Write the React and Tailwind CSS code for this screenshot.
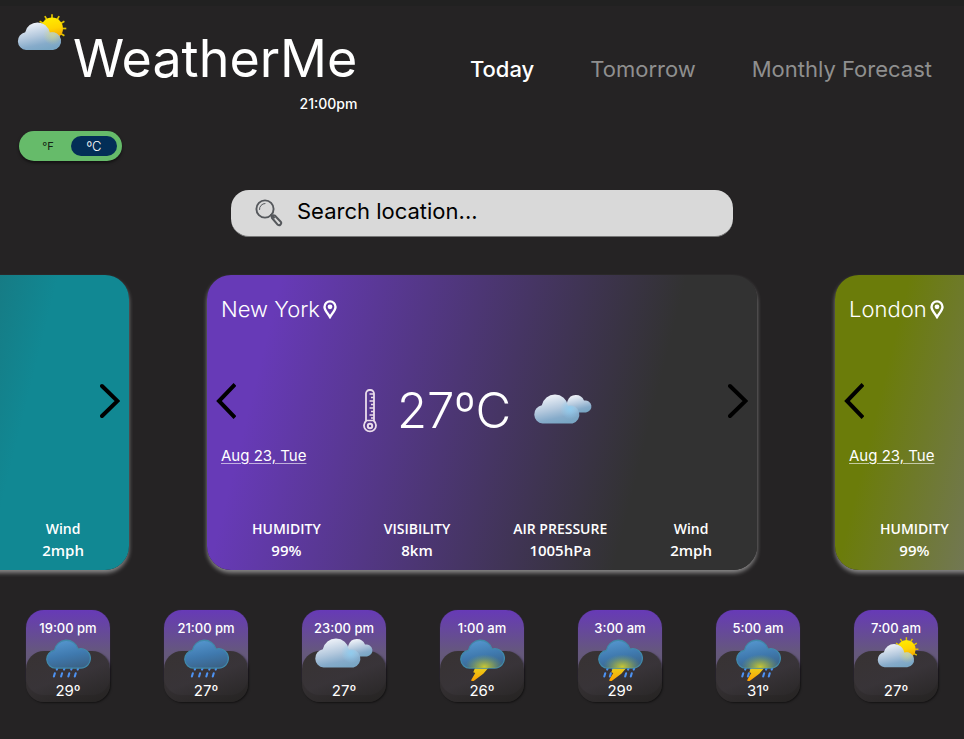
import React, { useId, useState } from 'react';

const CLOUD =
  'M12 38a11 11 0 0 1-1.5-21.9 15 15 0 0 1 29.3-1.6A12 12 0 1 1 43 38Z';

function Svg({ box, className, children }) {
  return (
    <svg viewBox={box} className={className} aria-hidden="true" fill="none">
      {children}
    </svg>
  );
}

function LightFill({ id }) {
  return (
    <linearGradient id={id} x1="0.25" y1="0" x2="0.6" y2="1">
      <stop offset="0" stopColor="#f4f6fb" />
      <stop offset="0.5" stopColor="#b3c8dd" />
      <stop offset="0.8" stopColor="#86abca" />
      <stop offset="1" stopColor="#79a6c4" />
    </linearGradient>
  );
}

function SunCloud({ className }) {
  const id = useId();
  const rays = Array.from({ length: 12 }, (_, i) => i * 30);
  return (
    <Svg box="0 0 50 38" className={className}>
      <defs>
        <LightFill id={id + 'c'} />
        <linearGradient id={id + 's'} x1="0.4" y1="0" x2="0.6" y2="1">
          <stop offset="0" stopColor="#ffec00" />
          <stop offset="0.5" stopColor="#ffd400" />
          <stop offset="1" stopColor="#f59a00" />
        </linearGradient>
        <radialGradient id={id + 'g'} cx="36" cy="21" r="10" gradientUnits="userSpaceOnUse">
          <stop offset="0" stopColor="#d9dc7a" stopOpacity="0.6" />
          <stop offset="1" stopColor="#d9dc7a" stopOpacity="0" />
        </radialGradient>
      </defs>
      {rays.map((a) => (
        <path key={a} d="M35 4V0.200" stroke="#e2c400" strokeWidth="1.700" transform={`rotate(${a} 35 14.5)`} />
      ))}
      <circle cx="35" cy="14.5" r="11" fill={`url(#${id}s)`} />
      <path d="M9 36a9 9 0 0 1-.8-17.8 12.5 12.5 0 0 1 24.5.4A8.9 8.9 0 1 1 36 36Z" fill={`url(#${id}c)`} />
      <path d="M9 36a9 9 0 0 1-.8-17.8 12.5 12.5 0 0 1 24.5.4A8.9 8.9 0 1 1 36 36Z" fill={`url(#${id}g)`} />
    </Svg>
  );
}

function Clouds({ className }) {
  const id = useId();
  return (
    <Svg box="0 0 60 31" className={className}>
      <defs>
        <LightFill id={id + 'c'} />
        <radialGradient id={id + 'g'} cx="37" cy="16" r="10" gradientUnits="userSpaceOnUse">
          <stop offset="0" stopColor="#8fcdf0" stopOpacity="0.9" />
          <stop offset="1" stopColor="#8fcdf0" stopOpacity="0" />
        </radialGradient>
      </defs>
      <path d="M38 19.500a9 9 0 0 1-3.500-11.500A8.800 8.800 0 0 1 51 7.600 6 6 0 1 1 53 19.400Z" fill={`url(#${id}c)`} />
      <path d="M9.500 30.500a9.200 9.200 0 0 1-.7-18.200 13.300 13.300 0 0 1 26.200.5A9 9 0 1 1 39.500 30.500Z" fill={`url(#${id}c)`} />
      <path d="M9.500 30.500a9.200 9.200 0 0 1-.7-18.200 13.300 13.300 0 0 1 26.200.5A9 9 0 1 1 39.500 30.500Z" fill={`url(#${id}g)`} />
    </Svg>
  );
}

function Storm({ rain, bolt, className }) {
  const id = useId();
  const drops = bolt ? [6, 13, 32, 39] : [8, 17, 26, 34];
  return (
    <Svg box="0 2 56 52" className={className}>
      <defs>
        <linearGradient id={id + 'c'} x1="0.3" y1="0" x2="0.6" y2="1">
          <stop offset="0" stopColor="#5596cf" />
          <stop offset="0.55" stopColor="#3f79ae" />
          <stop offset="1" stopColor="#3b6388" />
        </linearGradient>
        <linearGradient id={id + 'b'} x1="0.5" y1="0" x2="0.5" y2="1">
          <stop offset="0" stopColor="#e8d21c" />
          <stop offset="1" stopColor="#ff9d00" />
        </linearGradient>
        <radialGradient id={id + 'y'} cx="0.54" cy="0.95" r="0.44">
          <stop offset="0" stopColor="#c9c832" />
          <stop offset="0.45" stopColor="#a5b545" stopOpacity="0.6" />
          <stop offset="1" stopColor="#7aa060" stopOpacity="0" />
        </radialGradient>
      </defs>
      {rain && drops.map((x) => (
        <path key={x} d={`M${x + 6} 38.500l-.6 1.500M${x + 3} 44.500l-1.200 4`} stroke="#4d92f2" strokeWidth="2.600" strokeLinecap="round" />
      ))}
      {bolt && <path d="M19 37h17l-7 8-12.500 9.500c-1.700.800-3-.600-2.200-2.200l4.700-8-2.500-1Z" fill={`url(#${id}b)`} />}
      <path d={CLOUD} fill={`url(#${id}c)`} stroke="#4089aa" strokeWidth="1.6" />
      {bolt && <path d={CLOUD} fill={`url(#${id}y)`} />}
    </Svg>
  );
}

function Pin() {
  return (
    <Svg box="0 0 14 19" className="h-[19px] w-[14px]">
      <path d="M7 17C4.500 13 1.500 9.800 1.500 6.900a5.500 5.500 0 0 1 11 0C12.500 9.800 9.500 13 7 17Z" stroke="#fff" strokeWidth="2.400" />
      <circle cx="7" cy="6.800" r="2.400" fill="#fff" />
    </Svg>
  );
}

function Thermometer() {
  return (
    <Svg box="0 0 14 44" className="h-11 w-[14px]">
      <g stroke="#eadcea">
        <path d="M3 32V4.500a3.500 3.500 0 0 1 3.500-3.500h1A3.500 3.500 0 0 1 11 4.500V32a6 6 0 1 1-8 0Z" strokeWidth="1.800" />
        <path d="M3 31.500h8" strokeWidth="1.500" />
        <path d="M6.500 5H11M8 8.500h3M6.500 12H11M8 15.500h3M6.500 19H11M8 22.500h3M6.500 26H11M8 29h3" strokeWidth="1.400" />
      </g>
      <circle cx="7" cy="37" r="2.200" stroke="#eadcea" strokeWidth="2" />
    </Svg>
  );
}

function Magnifier() {
  return (
    <Svg box="0 0 28 28" className="h-7 w-7">
      <g stroke="#55585c" strokeLinecap="round">
        <circle cx="10" cy="10" r="8.600" strokeWidth="1.900" />
        <path d="M4.500 10.500A5.500 5.500 0 0 1 10 4.500" strokeWidth="1" />
        <path d="M16 16l3 2.500" strokeWidth="2" />
        <path d="M17 19c-.8-1.700 1-3.500 2.800-2.500l5.900 6.200c1.500 1.800-1 4.600-2.900 3.100Z" strokeWidth="2" strokeLinejoin="round" />
      </g>
    </Svg>
  );
}

const STATS = [
  ['HUMIDITY', '99%'],
  ['VISIBILITY', '8km'],
  ['AIR PRESSURE', '1005hPa'],
  ['Wind', '2mph'],
];

const PLACES = [
  { city: 'Lisbon', tone: 'bg-[linear-gradient(104deg,#323232_12%,#118893_77%)]' },
  { city: 'New York', tone: 'bg-[linear-gradient(104deg,#673ab7_12%,#323232_77%)]' },
  { city: 'London', tone: 'bg-[linear-gradient(104deg,#6b7c0a_12%,#757575_42%)]' },
];

function PlaceCard({ city, tone }) {
  return (
    <article
      className={`flex h-[295px] w-[550px] shrink-0 flex-col rounded-3xl pb-[10px] pt-5 text-white shadow-[0_3px_4px_rgba(255,255,255,0.45)] ${tone}`}
    >
      <h2 className="flex items-center gap-[3px] px-[14px] text-[22px] leading-7 font-light">
        {city}
        <Pin />
      </h2>
      <div className="mt-14 flex h-11 items-center justify-between px-[9px]">
        <button type="button" aria-label="Previous place">
          <Svg box="0 0 20 36" className="h-9 w-5">
            <path d="M19 1.500 3 18l16 16.500" stroke="#000" strokeWidth="4" />
          </Svg>
        </button>
        <div className="mr-2 mt-5 flex items-center">
          <Thermometer />
          <p className="ml-5 text-[49px] leading-[56px] font-light">27ºC</p>
          <Clouds className="mb-1.5 ml-[22px] h-[31px] w-[60px]" />
        </div>
        <button type="button" aria-label="Next place">
          <Svg box="0 0 20 36" className="h-9 w-5">
            <path d="M2 3l15.500 15L2 33" stroke="#000" strokeWidth="4" strokeLinecap="round" />
          </Svg>
        </button>
      </div>
      <p className="mt-[21px] px-[14px] text-[15px] leading-6 underline decoration-white/60 underline-offset-2">
        Aug 23, Tue
      </p>
      <dl className="mt-auto flex justify-between px-[45px] text-center font-['Open_Sans','Noto_Sans',sans-serif] font-semibold">
        {STATS.map(([name, value]) => (
          <div key={name}>
            <dt className="text-[14px] leading-[22px]">{name}</dt>
            <dd className="text-[15px] leading-5">{value}</dd>
          </div>
        ))}
      </dl>
    </article>
  );
}

const HOURS = [
  ['19:00 pm', '29º', 'rain'],
  ['21:00 pm', '27º', 'rain'],
  ['23:00 pm', '27º', 'clouds'],
  ['1:00 am', '26º', 'bolt'],
  ['3:00 am', '29º', 'storm'],
  ['5:00 am', '31º', 'storm'],
  ['7:00 am', '27º', 'sun'],
];

function HourIcon({ kind }) {
  if (kind === 'clouds') return <Clouds className="h-[31px] w-[60px]" />;
  if (kind === 'sun') return <SunCloud className="ml-1 h-8 w-[42px]" />;
  return <Storm className="mt-0.5 h-[42px] w-[45px]" rain={kind !== 'bolt'} bolt={kind !== 'rain'} />;
}

function HourCard({ time, temp, kind }) {
  return (
    <li className="grid h-[92px] w-[84px] text-white">
      <div className="col-start-1 row-start-1 h-[85px] rounded-[18px] bg-[linear-gradient(180deg,#673ab7_0%,#65587c_50%,#5c5768_100%)] shadow-[0_0_1px_rgba(103,58,183,0.6)]" />
      <div className="col-start-1 row-start-1 h-[51px] self-end rounded-[18px] bg-[linear-gradient(160deg,rgba(54,49,48,0.97),rgba(52,48,50,0.9)_50%,rgba(37,35,34,0.97))] shadow-[1px_1px_2px_rgba(0,0,0,0.5)]" />
      <div className="col-start-1 row-start-1 flex flex-col items-center pt-[9px]">
        <span className="text-[13px] leading-[18px] font-medium">{time}</span>
        <span className="flex h-11 w-full justify-center">
          <HourIcon kind={kind} />
        </span>
        <span className="text-[15px] leading-5">{temp}</span>
      </div>
    </li>
  );
}

const TABS = ['Today', 'Tomorrow', 'Monthly Forecast'];

export default function App() {
  const [unit, setUnit] = useState('C');
  const [tab, setTab] = useState('Today');
  return (
    <div className="min-h-screen overflow-hidden border-t-[6px] border-[#212121] bg-[#252324] font-['Inter',sans-serif]">
      <header className="flex items-start justify-between pl-[17px] pr-8 text-white">
        <div className="flex items-start gap-[6px] pt-2">
          <SunCloud className="h-[38px] w-[50px]" />
          <div className="pt-3">
            <h1 className="text-[52px] leading-[66px]">WeatherMe</h1>
            <p className="text-right text-[14px] leading-6 font-medium">21:00pm</p>
          </div>
        </div>
        <nav className="flex gap-14 pt-[47px] text-[22px] leading-8">
          {TABS.map((name) => (
            <a
              key={name}
              href="#"
              onClick={() => setTab(name)}
              className={name === tab ? 'whitespace-nowrap font-medium text-white' : 'whitespace-nowrap text-[#8f8f8f]'}
            >
              {name}
            </a>
          ))}
        </nav>
      </header>

      <div
        role="group"
        aria-label="Temperature unit"
        className="ml-[19px] mt-[15px] flex h-[30px] w-[103px] items-center justify-between rounded-full bg-[#66bb6a] pl-[6px] pr-[5px] shadow-[0_2px_3px_rgba(0,0,0,0.5)]"
      >
        {['F', 'C'].map((u) => (
          <button
            key={u}
            type="button"
            aria-pressed={u === unit}
            onClick={() => setUnit(u)}
            className={
              u === unit
                ? 'h-5 w-[46px] rounded-full bg-[#032e57] text-[13px] leading-5 font-light text-white'
                : 'h-5 w-[46px] rounded-full text-[11px] leading-5 text-[#122414]'
            }
          >
            {u === 'C' ? 'ºC' : '°F'}
          </button>
        ))}
      </div>

      <form
        onSubmit={(e) => e.preventDefault()}
        className="mx-auto mt-[29px] flex h-[47px] w-[502px] max-w-full items-center gap-[14px] rounded-[18px] border-b border-[#777] bg-[#d9d9d9] pb-1 pl-6 pr-5"
      >
        <label htmlFor="location" aria-label="Search location" className="shrink-0 pt-1">
          <Magnifier />
        </label>
        <input
          id="location"
          type="text"
          aria-label="Search location"
          placeholder="Search location..."
          className="min-w-0 flex-1 bg-transparent text-[22px] leading-8 text-black outline-none placeholder:text-black"
        />
      </form>

      <main>
        <section aria-label="Places" className="flex justify-center gap-[78px] overflow-hidden pb-3 pt-[38px]">
          {PLACES.map((p) => (
            <PlaceCard key={p.city} {...p} />
          ))}
        </section>
        <ul className="mt-7 flex justify-between px-[26px] pb-8">
          {HOURS.map(([time, temp, kind]) => (
            <HourCard key={time} time={time} temp={temp} kind={kind} />
          ))}
        </ul>
      </main>
    </div>
  );
}
